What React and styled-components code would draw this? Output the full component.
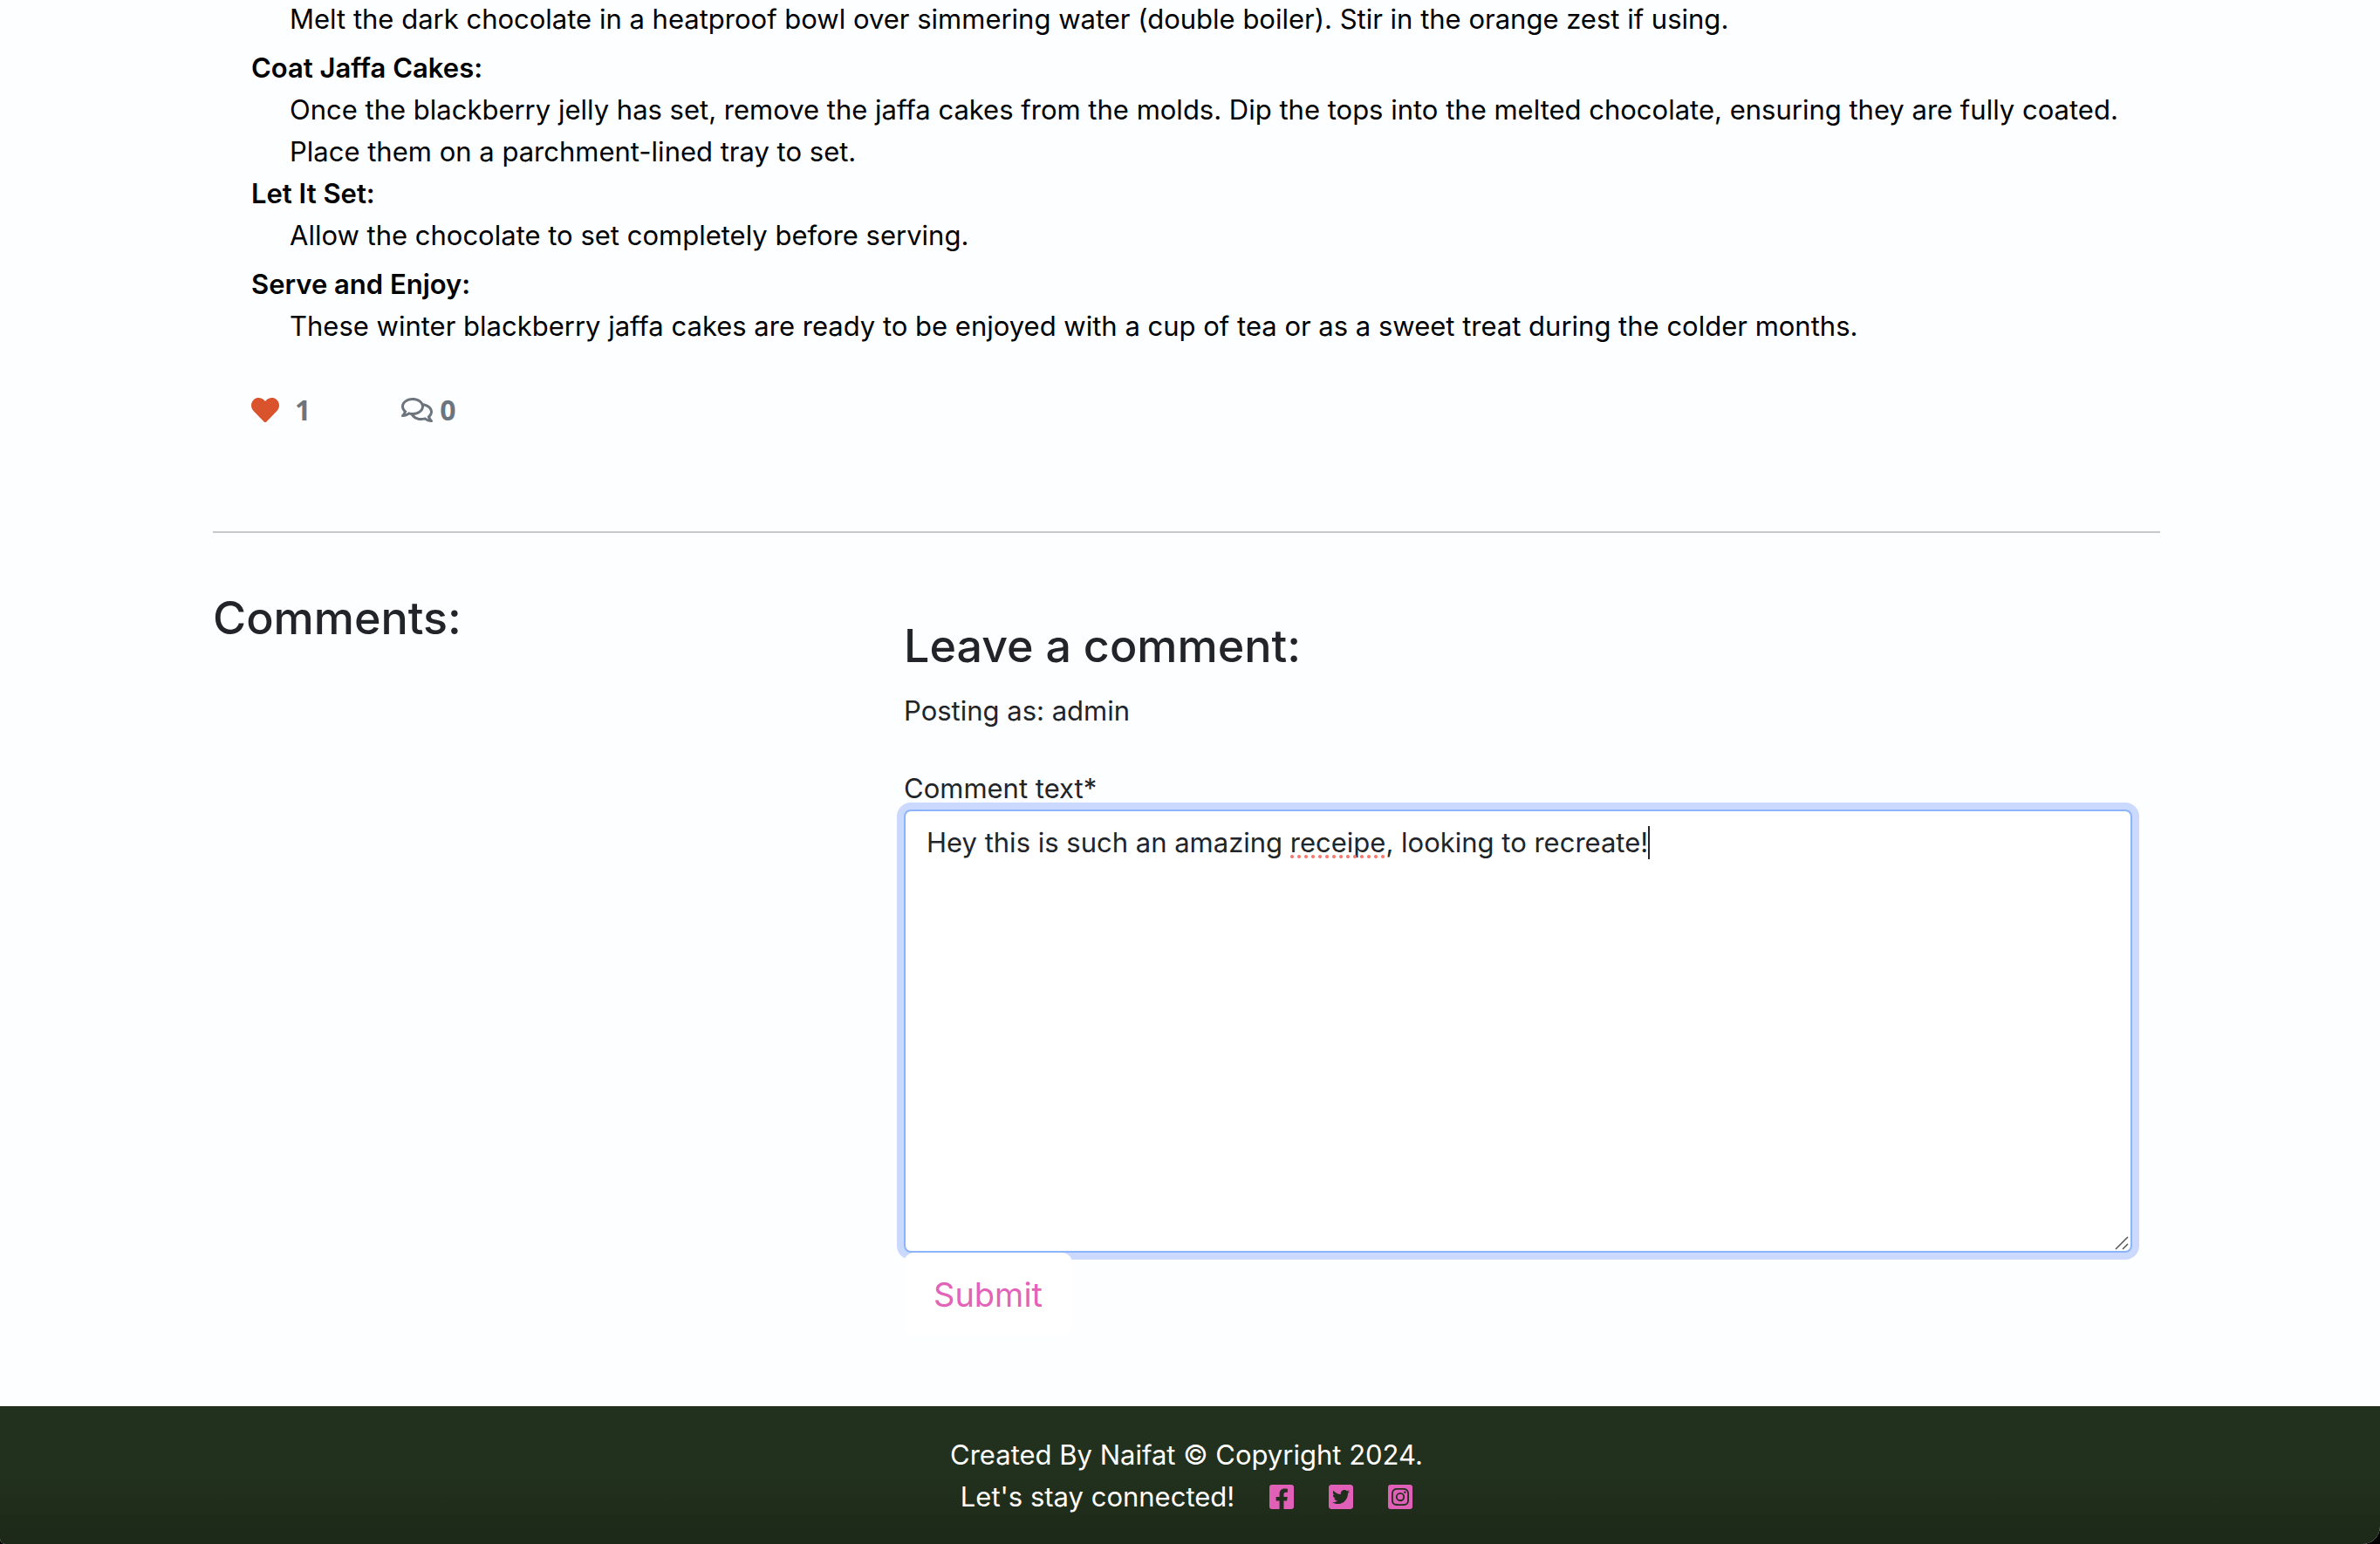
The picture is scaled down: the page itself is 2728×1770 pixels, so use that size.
import React, { useLayoutEffect, useRef, useState } from "react";
import styled, { createGlobalStyle } from "styled-components";
import {
  FaHeart,
  FaRegComments,
  FaFacebookSquare,
  FaTwitterSquare,
  FaInstagramSquare,
} from "react-icons/fa";

const GlobalStyle = createGlobalStyle`
  *, *::before, *::after { box-sizing: border-box; }
  html { background: #000; }
  body {
    margin: 0;
    color: #212529;
    font-family: Inter, "Liberation Sans", sans-serif;
    font-size: 31px;
    line-height: 48px;
  }
`;

const Page = styled.div`
  display: flex;
  flex-direction: column;
  min-height: 100vh;
  overflow: hidden;
  background: #fdfeff;
  border-radius: 0 0 20px 6px;
`;

const Container = styled.main`
  flex: 1;
  width: 100%;
  max-width: 2280px;
  margin: 0 auto;
  padding: 0 24px;
`;

const Gutter = styled.div`
  flex: 1;
  display: flex;
  padding-right: 8px;
`;

const Article = styled.article`
  margin-top: -2px;
  padding: 0 44px;
  color: #000;
`;

const Steps = styled.dl`
  margin: 0;
`;

const StepName = styled.dt`
  font-weight: 600;
`;

const StepText = styled.dd`
  margin: 0 0 ${(p) => (p.$tight ? "0" : "8px")} 44px;
`;

const Reactions = styled.div`
  display: flex;
  align-items: center;
  gap: 104px;
  margin-top: 48px;
  color: #6c757d;
  font-family: "Noto Sans", "Open Sans", sans-serif;
  font-size: 32px;
  font-weight: 700;
`;

const LikeButton = styled.button`
  display: flex;
  align-items: center;
  gap: 18px;
  padding: 0;
  border: 0;
  background: none;
  color: inherit;
  font: inherit;

  svg {
    color: #d9532c;
  }
`;

const CommentCount = styled.span`
  display: flex;
  align-items: center;
  gap: 8px;

  svg {
    width: 36px;
    height: 32px;
  }
`;

const Rule = styled.hr`
  margin: 115px 0 0;
  border: 0;
  border-top: 2px solid #c7c8ca;
`;

const Columns = styled.div`
  display: grid;
  grid-template-columns: minmax(0, 1fr) minmax(0, 2fr);
  margin: 0 -24px;
  padding-top: 64px;
`;

const Column = styled.section`
  padding: 0 24px;
`;

const Heading = styled.h3`
  margin: 0 0 16px;
  font-size: 52px;
  font-weight: 500;
  line-height: 68px;
`;

const FormPanel = styled.div`
  padding: 32px;
`;

const PostingAs = styled.p`
  margin: 0;
`;

const Form = styled.form`
  margin-top: 41px;
`;

const Label = styled.label`
  display: block;
`;

const Editor = styled.div`
  position: relative;
`;

const TextArea = styled.textarea`
  display: block;
  width: 100%;
  height: 508px;
  padding: 12px 24px;
  border: 2px solid #8cb4fb;
  border-radius: 8px;
  outline: 0;
  background: #fff;
  box-shadow: 0 0 0 8px #cad9fd;
  color: #212529;
  font: inherit;
  caret-color: transparent;
  resize: vertical;

  &::-webkit-resizer {
    background: none;
  }
`;

const SpellingMark = styled.span`
  position: absolute;
  top: 52px;
  height: 4px;
  background: radial-gradient(circle at 2px 2px, #f9796f 1.5px, transparent 2.5px) repeat-x;
  background-size: 8px 4px;
  pointer-events: none;
`;

const Caret = styled.span`
  position: absolute;
  top: 19px;
  width: 2px;
  height: 38px;
  background: #212529;
  pointer-events: none;
`;

const ResizeGrip = styled.svg`
  position: absolute;
  right: 4px;
  bottom: 3px;
  width: 16px;
  height: 16px;
  stroke: #555;
  stroke-width: 1.5;
  pointer-events: none;
`;

const SubmitButton = styled.button`
  position: relative;
  padding: 18px 34px;
  border: 0;
  border-radius: 12px;
  background: #fff;
  color: #e363b9;
  font: inherit;
  font-size: 38px;
  line-height: 60px;
`;

const Footer = styled.footer`
  padding: 32px 8px 30px 0;
  background: linear-gradient(#22301e 0, #22301e 50%, #1d2918 100%);
  color: #fff;
  text-align: center;
`;

const FooterLine = styled.p`
  display: flex;
  align-items: center;
  justify-content: center;
  gap: 40px;
  margin: 0;
`;

const SocialLink = styled.a`
  display: flex;
  color: #e060b8;

  svg {
    width: 28px;
    height: 32px;
  }
`;

const steps = [
  {
    text: "Melt the dark chocolate in a heatproof bowl over simmering water (double boiler). Stir in the orange zest if using.",
  },
  {
    name: "Coat Jaffa Cakes:",
    text: "Once the blackberry jelly has set, remove the jaffa cakes from the molds. Dip the tops into the melted chocolate, ensuring they are fully coated. Place them on a parchment-lined tray to set.",
    tight: true,
  },
  { name: "Let It Set:", text: "Allow the chocolate to set completely before serving." },
  {
    name: "Serve and Enjoy:",
    text: "These winter blackberry jaffa cakes are ready to be enjoyed with a cup of tea or as a sweet treat during the colder months.",
  },
];

const socials = [
  { name: "Facebook", Icon: FaFacebookSquare },
  { name: "Twitter", Icon: FaTwitterSquare },
  { name: "Instagram", Icon: FaInstagramSquare },
];

const MISSPELT = "receipe";

function CommentEditor() {
  const area = useRef(null);
  const [value, setValue] = useState("Hey this is such an amazing receipe, looking to recreate!");
  const [marks, setMarks] = useState(null);

  // Measures the first line to place the spelling mark and the caret.
  useLayoutEffect(() => {
    const css = getComputedStyle(area.current);
    const ctx = document.createElement("canvas").getContext("2d");
    ctx.font = `${css.fontWeight} ${css.fontSize} ${css.fontFamily}`;
    const inset = parseInt(css.paddingLeft, 10) + parseInt(css.borderLeftWidth, 10);
    const width = (s) => Math.round(ctx.measureText(s).width);
    const at = value.indexOf(MISSPELT);
    setMarks({
      word: at < 0 ? null : { left: inset + width(value.slice(0, at)), width: width(MISSPELT) },
      caret: inset + width(value),
    });
  }, [value]);

  return (
    <Editor>
      <TextArea
        id="comment"
        ref={area}
        value={value}
        spellCheck={false}
        onChange={(e) => setValue(e.target.value)}
      />
      {marks?.word && <SpellingMark style={marks.word} />}
      {marks && <Caret style={{ left: marks.caret }} />}
      <ResizeGrip viewBox="0 0 16 16" aria-hidden="true">
        <path d="M1 15 15 1M9 15l6-6" />
      </ResizeGrip>
    </Editor>
  );
}

export default function App() {
  return (
    <Page>
      <GlobalStyle />
      <Gutter>
        <Container>
          <Article>
            <Steps>
              {steps.map((s) => (
                <React.Fragment key={s.text}>
                  {s.name && <StepName>{s.name}</StepName>}
                  <StepText $tight={s.tight}>{s.text}</StepText>
                </React.Fragment>
              ))}
            </Steps>
            <Reactions>
              <LikeButton type="button">
                <FaHeart />1
              </LikeButton>
              <CommentCount>
                <FaRegComments />0
              </CommentCount>
            </Reactions>
          </Article>
          <Rule />
          <Columns>
            <Column>
              <Heading>Comments:</Heading>
            </Column>
            <Column>
              <FormPanel>
                <Heading>Leave a comment:</Heading>
                <PostingAs>Posting as: admin</PostingAs>
                <Form onSubmit={(e) => e.preventDefault()}>
                  <Label htmlFor="comment">Comment text*</Label>
                  <CommentEditor />
                  <SubmitButton type="submit">Submit</SubmitButton>
                </Form>
              </FormPanel>
            </Column>
          </Columns>
        </Container>
      </Gutter>
      <Footer>
        <FooterLine>Created By Naifat © Copyright 2024.</FooterLine>
        <FooterLine>
          Let's stay connected!
          {socials.map(({ name, Icon }) => (
            <SocialLink key={name} href={`#${name.toLowerCase()}`} aria-label={name}>
              <Icon />
            </SocialLink>
          ))}
        </FooterLine>
      </Footer>
    </Page>
  );
}
